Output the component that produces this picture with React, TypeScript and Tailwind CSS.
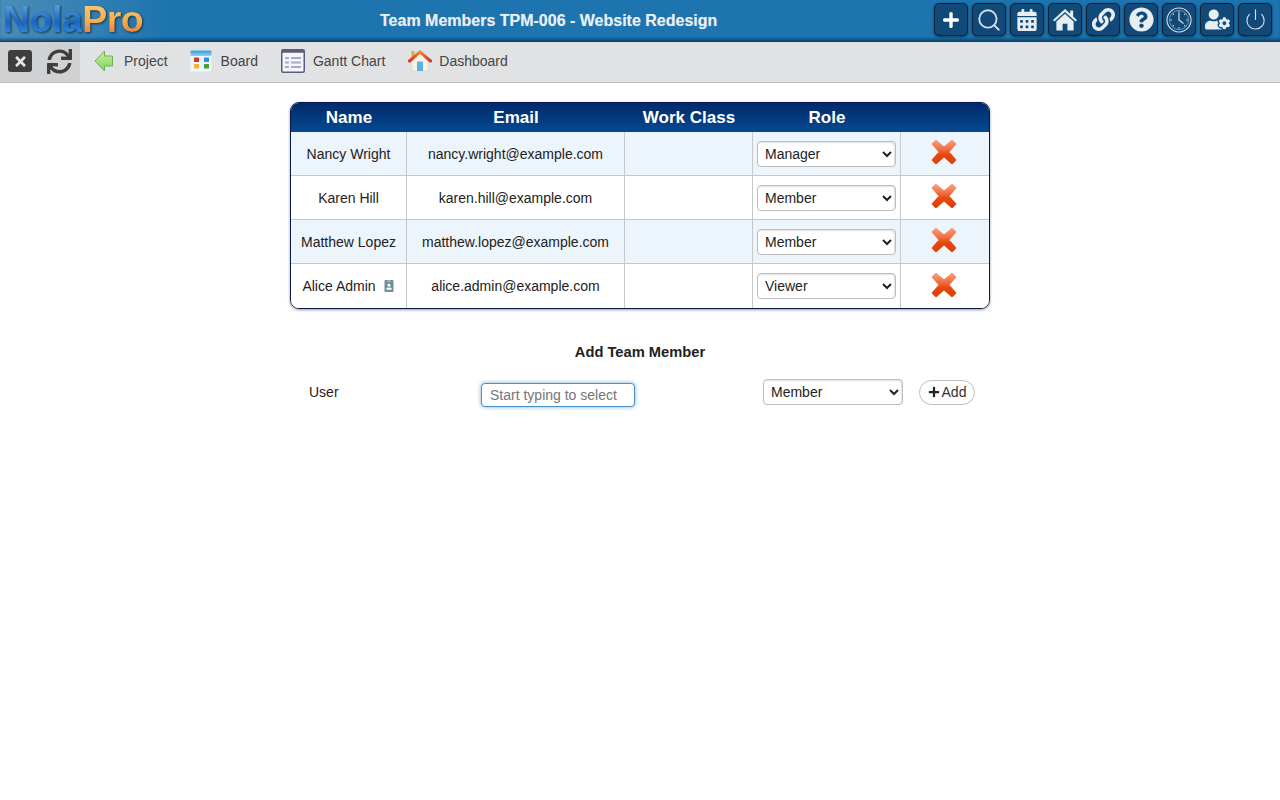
import React from "react";
import { FaPlus, FaCalendarAlt, FaLink, FaQuestionCircle, FaUserCog, FaTimes, FaSync, FaIdBadge } from "react-icons/fa";
import { LuPower, LuSearch } from "react-icons/lu";

const headerBtn = "w-[34px] h-[33px] rounded-[5px] border border-[#0b2238] bg-[#114a78] flex items-center justify-center text-[#e6edf3] shadow-[0_1px_3px_rgba(0,0,0,0.5)]";

function RedX() {
  return (
    <svg width="26" height="26" viewBox="0 0 26 26">
      <defs>
        <linearGradient id="rx" x1="0" y1="0" x2="0" y2="26" gradientUnits="userSpaceOnUse">
          <stop offset="0" stopColor="#f8a888" />
          <stop offset="0.42" stopColor="#ee6a3c" />
          <stop offset="0.6" stopColor="#e8480f" />
          <stop offset="1" stopColor="#dd3a04" />
        </linearGradient>
      </defs>
      <path d="M5 1.5 L13 8.5 L21 1.5 L24.5 5 L17.5 13 L24.5 21 L21 24.5 L13 17.5 L5 24.5 L1.5 21 L8.5 13 L1.5 5 Z" fill="url(#rx)" stroke="url(#rx)" strokeWidth="1.6" strokeLinejoin="round" />
    </svg>
  );
}

function ArrowIcon() {
  return (
    <svg width="20" height="22" viewBox="0 0 20 22">
      <defs>
        <linearGradient id="ga" x1="0" y1="0" x2="0" y2="1">
          <stop offset="0" stopColor="#c8f0a0" />
          <stop offset="1" stopColor="#7fd35c" />
        </linearGradient>
      </defs>
      <path d="M1 11 L10.5 1 V6 H18.5 V16 H10.5 V21 Z" fill="url(#ga)" stroke="#6cb058" strokeWidth="1" strokeLinejoin="round" />
    </svg>
  );
}

function BoardIcon() {
  return (
    <svg width="22" height="22" viewBox="0 0 22 22">
      <defs>
        <linearGradient id="bh" x1="0" y1="0" x2="0" y2="1">
          <stop offset="0" stopColor="#2f9be0" />
          <stop offset="1" stopColor="#8fd0f5" />
        </linearGradient>
      </defs>
      <rect x="0.5" y="0.5" width="21" height="21" rx="1.5" fill="#eef5fc" />
      <rect x="0.5" y="0.5" width="21" height="5.5" rx="1" fill="url(#bh)" />
      <rect x="4" y="7.5" width="5" height="4.5" rx="0.5" fill="#d9342b" />
      <rect x="14" y="7.5" width="5" height="4.5" rx="0.5" fill="#2e8fe0" />
      <rect x="4" y="14" width="5" height="4.5" rx="0.5" fill="#f4b32a" />
      <rect x="14" y="14" width="5" height="4.5" rx="0.5" fill="#3fa535" />
    </svg>
  );
}

function GanttIcon() {
  return (
    <svg width="24" height="24" viewBox="0 0 24 24">
      <rect x="0.75" y="0.75" width="22.5" height="22.5" rx="1.5" fill="#f5f5fb" stroke="#5b5c7a" strokeWidth="1.5" />
      <rect x="0.75" y="0.75" width="22.5" height="3" fill="#5b5c7a" />
      <g fill="#a9aac6">
        <rect x="4" y="8" width="4" height="2" />
        <rect x="10" y="8" width="10" height="2" />
        <rect x="4" y="12.5" width="4" height="2" />
        <rect x="10" y="12.5" width="10" height="2" />
        <rect x="4" y="17" width="4" height="2" />
        <rect x="10" y="17" width="10" height="2" />
      </g>
    </svg>
  );
}

function HomeIcon() {
  return (
    <svg width="24" height="22" viewBox="0 0 24 22">
      <defs>
        <linearGradient id="hr" x1="0" y1="0" x2="0" y2="1">
          <stop offset="0" stopColor="#ee8a3a" />
          <stop offset="1" stopColor="#d9301f" />
        </linearGradient>
      </defs>
      <rect x="3.5" y="1" width="3" height="6" fill="#e0a848" />
      <path d="M4 10 L12 3 L20 10 V21 H4 Z" fill="#f7f1e6" stroke="#d8d2c6" strokeWidth="0.5" />
      <rect x="9" y="11.5" width="6" height="9.5" fill="#5db3e6" />
      <path d="M1.5 11 L12 1.8 L22.5 11" fill="none" stroke="url(#hr)" strokeWidth="3" strokeLinejoin="round" strokeLinecap="round" />
    </svg>
  );
}

function TopHome() {
  return (
    <svg width="24" height="23" viewBox="0 0 25 24" fill="currentColor">
      <path d="M12.5 1 L18 6 V2.5 H21 V8.8 L25 12.5 L23.6 14 L12.5 4.2 L1.4 14 L0 12.5 Z" />
      <path d="M12.5 6 L3.5 14 V23.5 H10 V16.5 H15 V23.5 H21.5 V14 Z" />
    </svg>
  );
}

function TopClock() {
  return (
    <svg width="26" height="26" viewBox="0 0 26 26" fill="none" stroke="#d5dee6">
      <circle cx="13" cy="13" r="12" strokeWidth="1.1" />
      <circle cx="13" cy="13" r="9.6" strokeWidth="0.8" opacity="0.6" />
      <path d="M13 6 V13 L17.5 16.5" strokeWidth="1.2" />
      <g fill="#d5dee6" stroke="none">
        <circle cx="13" cy="5" r="0.8" />
        <circle cx="21" cy="13" r="0.8" />
        <circle cx="13" cy="21" r="0.8" />
        <circle cx="5" cy="13" r="0.8" />
        <circle cx="7.3" cy="7.3" r="0.7" />
        <circle cx="18.7" cy="7.3" r="0.7" />
        <circle cx="7.3" cy="18.7" r="0.7" />
        <circle cx="18.7" cy="18.7" r="0.7" />
      </g>
    </svg>
  );
}

const rows = [
  { name: "Nancy Wright", email: "nancy.wright@example.com", role: "Manager", alt: true, last: false },
  { name: "Karen Hill", email: "karen.hill@example.com", role: "Member", alt: false, last: false },
  { name: "Matthew Lopez", email: "matthew.lopez@example.com", role: "Member", alt: true, last: false },
  { name: "Alice Admin", email: "alice.admin@example.com", role: "Viewer", alt: false, badge: true, last: true },
];

function RoleSelect({ value, className }: { value: string; className: string }) {
  return (
    <select
      defaultValue={value}
      className={"h-[26px] rounded-[4px] border border-[#bdbdbd] bg-white pl-[3px] text-[14px] text-[#222] shadow-[inset_-1px_1px_2px_rgba(0,0,0,0.12)] " + className}
    >
      <option>Manager</option>
      <option>Member</option>
      <option>Viewer</option>
    </select>
  );
}

function NavItem({ icon, label, className, labelClass }: { icon: React.ReactNode; label: string; className: string; labelClass: string }) {
  return (
    <div className={"flex items-center pb-[2px] " + className}>
      <div className="flex w-[24px] justify-center">{icon}</div>
      <span className={"text-[14px] text-[#444] " + labelClass}>{label}</span>
    </div>
  );
}

export default function App() {
  return (
    <div className="min-h-[800px] bg-white font-['Liberation_Sans',Arial,sans-serif] text-[14px] text-[#222]">
      <header className="relative flex h-[42px] items-center border-b border-[#0d3f66] bg-[#1d74af] bg-[linear-gradient(90deg,#4a8db8_0px,#1d74af_170px)] shadow-[inset_0_-3px_3px_-1px_rgba(6,50,90,0.65)]">
        <div className="ml-[3px] flex h-[42px] w-[145px] items-center pb-[3px] text-[37.5px] font-bold tracking-[-0.5px] drop-shadow-[1px_1px_1px_rgba(0,0,0,0.6)]">
          <span className="bg-[linear-gradient(180deg,#6cb2ea_15%,#1766c4_55%,#3f97e6_85%)] bg-clip-text text-transparent">Nola</span>
          <span className="bg-[linear-gradient(180deg,#fbd07c_15%,#f5ab4c_55%,#ec6a2e_85%)] bg-clip-text text-transparent">Pro</span>
        </div>
        <h1 className="ml-[232px] text-[16px] font-bold text-[#e9f0f6] [text-shadow:0_0_1px_rgba(255,255,255,0.4)]">
          Team Members TPM-006 - Website Redesign
        </h1>
        <div className="ml-auto mr-[8px] flex items-center gap-[4px] pb-[2px]">
          <button className={headerBtn}><FaPlus size={18} color="#fff" /></button>
          <button className={headerBtn}><LuSearch size={26} strokeWidth={1.7} color="#d5dee6" /></button>
          <button className={headerBtn}><FaCalendarAlt size={22} /></button>
          <button className={headerBtn}><TopHome /></button>
          <button className={headerBtn}><FaLink size={23} /></button>
          <button className={headerBtn}><FaQuestionCircle size={25} /></button>
          <button className={headerBtn}><TopClock /></button>
          <button className={headerBtn}><FaUserCog size={25} /></button>
          <button className={headerBtn}><LuPower size={23} strokeWidth={1.2} color="#d5dee6" /></button>
        </div>
      </header>

      <nav className="flex h-[41px] items-stretch border-b border-[#bdbdbd] bg-[#e1e2e4]">
        <div className="flex w-[80px] items-center bg-[#d0d1d3] pb-[2px] pl-[8px]">
          <div className="flex h-[22px] w-[24px] items-center justify-center rounded-[3px] bg-[#3e3e3e]">
            <FaTimes size={15} color="#e4e4e4" />
          </div>
          <FaSync size={25} color="#3e3e3e" className="ml-[15px]" />
        </div>
        <NavItem icon={<ArrowIcon />} label="Project" className="ml-[12px]" labelClass="ml-[8px]" />
        <NavItem icon={<BoardIcon />} label="Board" className="ml-[21px]" labelClass="ml-[8px]" />
        <NavItem icon={<GanttIcon />} label="Gantt Chart" className="ml-[23px]" labelClass="ml-[8px]" />
        <NavItem icon={<HomeIcon />} label="Dashboard" className="ml-[23px]" labelClass="ml-[7px]" />
      </nav>

      <main className="ml-[290px] w-[700px] pt-[19px]">
        <div className="overflow-hidden rounded-[9px] border border-[#0a1a4a] shadow-[0_1px_3px_rgba(0,0,0,0.4)]">
          <table className="w-full table-fixed border-separate border-spacing-0">
            <colgroup>
              <col className="w-[116px]" />
              <col className="w-[218px]" />
              <col className="w-[128px]" />
              <col className="w-[148px]" />
              <col />
            </colgroup>
            <thead>
              <tr className="h-[29px] bg-[linear-gradient(180deg,#00296b_0%,#064a90_100%)] text-[17px] font-bold text-white">
                <th>Name</th>
                <th>Email</th>
                <th>Work Class</th>
                <th>Role</th>
                <th></th>
              </tr>
            </thead>
            <tbody>
              {rows.map((r) => {
                const bottom = r.last ? "" : " border-b";
                const textPad = r.last ? "" : " pt-[1px]";
                return (
                  <tr key={r.email} className={"h-[44px] " + (r.alt ? "bg-[#ecf4fc]" : "bg-white")}>
                    <td className={"border-r border-[#c8c8c8] text-center" + bottom + textPad}>
                      <span className="inline-flex items-center">
                        {r.name}
                        {r.badge && <FaIdBadge size={12} color="#6f919b" className="ml-[7px]" />}
                      </span>
                    </td>
                    <td className={"border-r border-[#c8c8c8] text-center" + bottom + textPad}>{r.email}</td>
                    <td className={"border-r border-[#c8c8c8]" + bottom}></td>
                    <td className={"border-r border-[#c8c8c8] pl-[4px]" + bottom}>
                      <RoleSelect value={r.role} className="block w-[139px]" />
                    </td>
                    <td className={"border-[#c8c8c8]" + bottom}>
                      <div className="-mt-[3px] ml-[30px] flex"><RedX /></div>
                    </td>
                  </tr>
                );
              })}
            </tbody>
          </table>
        </div>

        <h2 className="mt-[35px] text-center text-[14.7px] font-bold leading-[16px]">Add Team Member</h2>
        <div className="mt-[19px] flex items-center">
          <div className="mb-[2px] w-[191px] pl-[19px]">User</div>
          <input
            readOnly
            placeholder="Start typing to select"
            className="mt-[4px] h-[24px] w-[154px] rounded-[4px] border border-[#4a90c4] bg-white pl-[8px] text-[14px] shadow-[0_0_4px_rgba(63,143,201,0.7)] outline-none placeholder:text-[#757575]"
          />
          <RoleSelect value="Member" className="mb-[2px] ml-[128px] w-[140px]" />
          <button className="mb-[2px] ml-[16px] flex h-[25px] w-[56px] items-center justify-center rounded-full border border-[#bdbdbd] bg-white text-[14px] text-[#333]">
            <FaPlus size={12} color="#222" className="mr-[2px]" />Add
          </button>
        </div>
      </main>
    </div>
  );
}
